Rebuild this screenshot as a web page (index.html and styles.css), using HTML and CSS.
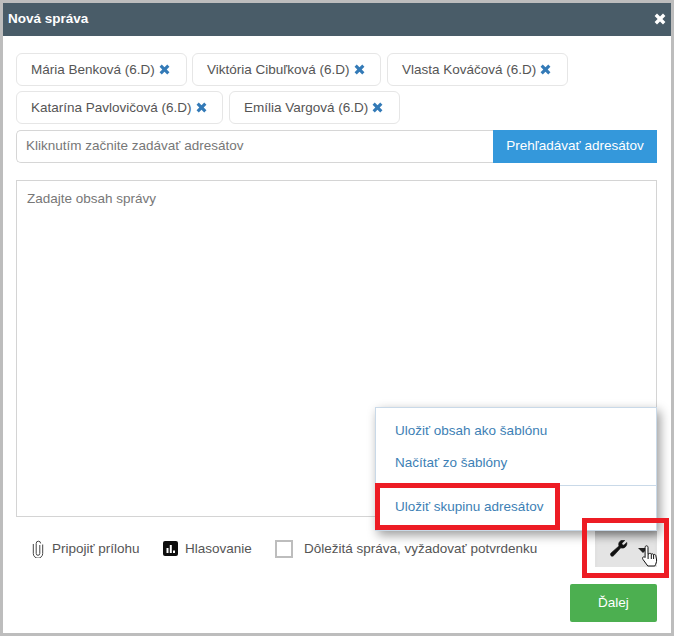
FILE: index.html
```html
<!DOCTYPE html>
<html lang="sk">
<head>
<meta charset="utf-8">
<title>Nová správa</title>
<link rel="stylesheet" href="styles.css">
</head>
<body>
<div class="modal">
  <header class="head">
    <span class="title">Nová správa</span>
    <svg class="close" viewBox="0 0 12 12"><path d="M3 .6 6 3.600 9 .6 11.400 3 8.400 6 11.400 9 9 11.400 6 8.400 3 11.400.6 9 3.600 6 .6 3z"/></svg>
  </header>
  <div class="body">
    <div class="chips">
      <span class="chip c1">Mária Benková (6.D)<svg class="x" viewBox="0 0 12 12"><path d="M3 .6 6 3.600 9 .6 11.400 3 8.400 6 11.400 9 9 11.400 6 8.400 3 11.400.6 9 3.600 6 .6 3z"/></svg></span>
      <span class="chip c2">Viktória Cibuľková (6.D)<svg class="x" viewBox="0 0 12 12"><path d="M3 .6 6 3.600 9 .6 11.400 3 8.400 6 11.400 9 9 11.400 6 8.400 3 11.400.6 9 3.600 6 .6 3z"/></svg></span>
      <span class="chip c3">Vlasta Kováčová (6.D)<svg class="x" viewBox="0 0 12 12"><path d="M3 .6 6 3.600 9 .6 11.400 3 8.400 6 11.400 9 9 11.400 6 8.400 3 11.400.6 9 3.600 6 .6 3z"/></svg></span>
      <span class="chip c4">Katarína Pavlovičová (6.D)<svg class="x" viewBox="0 0 12 12"><path d="M3 .6 6 3.600 9 .6 11.400 3 8.400 6 11.400 9 9 11.400 6 8.400 3 11.400.6 9 3.600 6 .6 3z"/></svg></span>
      <span class="chip c5">Emília Vargová (6.D)<svg class="x" viewBox="0 0 12 12"><path d="M3 .6 6 3.600 9 .6 11.400 3 8.400 6 11.400 9 9 11.400 6 8.400 3 11.400.6 9 3.600 6 .6 3z"/></svg></span>
    </div>
    <div class="search">
      <div class="search-input">Kliknutím začnite zadávať adresátov</div>
      <div class="search-btn">Prehľadávať adresátov</div>
    </div>
    <div class="editor">Zadajte obsah správy</div>
    <div class="tools">
      <span class="tool attach">
        <svg class="clip" viewBox="0 0 12 18"><path d="M7.800 5v8.500a1.800 1.800 0 0 1-3.600 0V3.400a2.200 2.200 0 0 1 4.400 0M10.700 4.500v9a4.700 4.700 0 0 1-9.400 0V4"/></svg>
        Pripojiť prílohu
      </span>
      <span class="tool poll">
        <svg class="bars" viewBox="0 0 15 15"><rect width="15" height="15" rx="2"/><path class="bar" d="M3.500 7h2v5h-2zM6.800 4h2v8h-2zM10 9.500h2V12h-2z"/></svg>
        Hlasovanie
      </span>
      <span class="tool important">
        <span class="check"></span>
        Dôležitá správa, vyžadovať potvrdenku
      </span>
      <span class="wrench-btn">
        <svg class="wrench" viewBox="0 0 20 18"><path d="M17.700 2.600 14.600 5.500 12.900 5 12.500 3.400 15.500.6C13.700-.1 11.700.2 10.400 1.500 9.100 2.800 8.800 4.700 9.500 6.300L1.100 13.700C.2 14.500.2 15.800 1 16.600 1.800 17.400 3.100 17.400 3.900 16.500L11.400 8.300C13 8.900 14.900 8.600 16.200 7.300 17.500 6 18 4.300 17.700 2.600Z"/></svg>
        <span class="caret"></span>
      </span>
    </div>
    <div class="actions"><span class="next">Ďalej</span></div>
  </div>

  <ul class="menu">
    <li>Uložiť obsah ako šablónu</li>
    <li>Načítať zo šablóny</li>
    <li class="sep">Uložiť skupinu adresátov</li>
  </ul>
  <div class="mark mark-item"></div>
  <div class="mark mark-btn"></div>
  <svg class="cursor" viewBox="0 0 18 24"><path d="M5.500 1.800C6.500 1.800 7 2.500 7 3.500V10L8 9.800C8.700 9 9.800 9.200 10.300 10.100 11 9.500 12 9.800 12.500 10.600 13.300 10.100 14.500 10.500 14.800 11.500L15.600 16C15.700 18 14.800 20 13.800 22H6.800L2 15.500C1.300 14.500 1.500 13.500 2.200 13 3 12.500 3.700 13 4.100 13.500V3.500C4.100 2.500 4.600 1.800 5.500 1.800Z"/><path d="M7.100 10V15M10.300 10.100V15M12.600 10.700V15"/></svg>
</div>
</body>
</html>
```
FILE: styles.css
```css
* { box-sizing: border-box; }
html, body { margin: 0; height: 100%; }
body {
  background: #bdbdbd;
  padding: 3px;
  font-family: "Liberation Sans", Arial, sans-serif;
  font-size: 13.5px;
  color: #555;
}
.modal {
  position: relative;
  width: 668px;
  height: 630px;
  background: #fff;
  overflow: hidden;
}
.head {
  height: 33px;
  background: #495c68;
  color: #fff;
  display: flex;
  align-items: center;
  justify-content: space-between;
  padding: 0 5px 3px 5px;
}
.title { font-weight: 700; font-size: 13.5px; }
.close { width: 12px; height: 12px; fill: #fff; margin-top: 2px; }
.body { padding: 17px 14px 0 13px; }
.chips { display: flex; flex-wrap: wrap; column-gap: 5px; row-gap: 5px; }
.chip {
  height: 33px;
  border: 1px solid #e6e6e6;
  border-radius: 6px;
  display: flex;
  align-items: center;
  padding-left: 14px;
  white-space: nowrap;
}
.c1 { width: 171px; }
.c2 { width: 189px; }
.c3 { width: 181px; margin-left: 1px; }
.c4 { width: 207px; }
.c5 { width: 171px; margin-left: 1px; }
.x { width: 11px; height: 11px; fill: #337ab7; margin-left: 4px; flex: none; }
.search { display: flex; height: 33px; margin-top: 6px; }
.search-input {
  flex: 1;
  border: 1px solid #d6d6d6;
  border-right: 0;
  border-radius: 5px 0 0 5px;
  padding-left: 9px;
  line-height: 30px;
  color: #777;
}
.search-btn {
  width: 164px;
  background: #3498db;
  color: #fff;
  text-align: center;
  line-height: 31px;
}
.editor {
  height: 337px;
  margin-top: 17px;
  border: 1px solid #d4d4d4;
  padding: 10px 10px;
  color: #777;
  line-height: 16px;
}
.tools { display: flex; align-items: center; height: 37px; margin-top: 13px; }
.tool { display: flex; align-items: center; white-space: nowrap; color: #555; }
.attach { margin-left: 16px; width: 131px; }
.clip { width: 12px; height: 18px; fill: none; stroke: #444; stroke-width: 1; margin-right: 8px; }
.poll { width: 112px; }
.bars { width: 15px; height: 15px; fill: #0d0d0d; margin-right: 7px; }
.bar { fill: #fff; }
.check {
  width: 18px;
  height: 18px;
  border: 2px solid #bdbdbd;
  margin-right: 11px;
}
.important { flex: 1; }
.wrench-btn {
  width: 62px;
  height: 37px;
  background: #e4e4e4;
  display: flex;
  align-items: center;
  padding-left: 15px;
  flex: none;
  box-shadow: inset 0 10px 8px -6px #b0b0b0;
}
.wrench { width: 19px; height: 17px; fill: #111; stroke: #111; stroke-width: .7; }
.caret {
  width: 0;
  height: 0;
  border-left: 5px solid transparent;
  border-right: 5px solid transparent;
  border-top: 5px solid #222;
  margin-left: 9px;
  margin-top: 3px;
}
.actions { display: flex; justify-content: flex-end; margin-top: 17px; }
.next {
  width: 87px;
  height: 38px;
  background: #4caf50;
  color: #fff;
  border-radius: 2px;
  text-align: center;
  line-height: 38px;
}
.menu {
  position: absolute;
  left: 372px;
  top: 404px;
  width: 282px;
  height: 124px;
  margin: 0;
  padding: 7px 0 0;
  list-style: none;
  background: #fff;
  border: 1px solid #c9d9e8;
  box-shadow: 3px 4px 10px rgba(0, 0, 0, .4);
  color: #3d7fb5;
}
.menu li { height: 32px; line-height: 32px; padding-left: 19px; }
.menu .sep { border-top: 1px solid #c9d9e8; margin-top: 6px; height: 45px; line-height: 41px; }
.mark { position: absolute; border: 5px solid #ed1c24; }
.mark-item { left: 372px; top: 480px; width: 185px; height: 47px; }
.mark-btn { left: 579px; top: 515px; width: 87px; height: 60px; }
.cursor {
  position: absolute;
  left: 638px;
  top: 541px;
  width: 18px;
  height: 24px;
  fill: #fff;
  stroke: #111;
  stroke-width: 1;
}
```
